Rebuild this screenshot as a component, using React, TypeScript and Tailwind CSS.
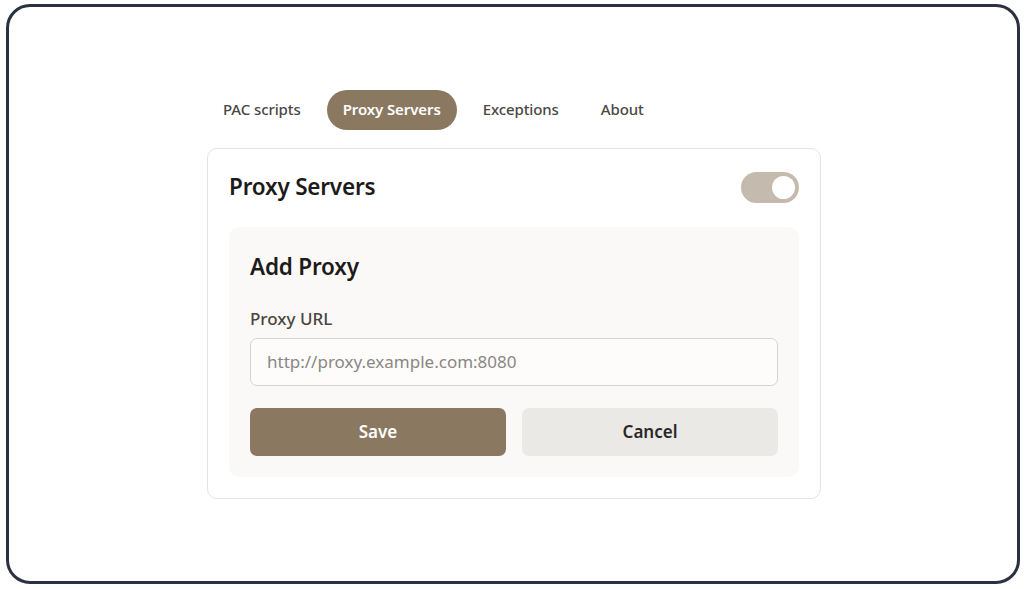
import React, { useState } from 'react';

const tabs = ['PAC scripts', 'Proxy Servers', 'Exceptions', 'About'];

export default function App() {
  const [active, setActive] = useState('Proxy Servers');
  const [enabled, setEnabled] = useState(true);
  const [url, setUrl] = useState('');

  return (
    <div
      className="w-[1026px] h-[589px] bg-white p-[4px_6px_5px_6px]"
      style={{ fontFamily: '"Noto Sans", "Open Sans", sans-serif' }}
    >
      <div className="h-full w-full rounded-[24px] border-[3px] border-[#2b3140] bg-white flex items-center justify-center">
        <div className="w-[614px] ml-[2px] flex flex-col gap-[18px]">
          <nav className="flex items-center gap-[10px]">
            {tabs.map((t) => (
              <button
                key={t}
                onClick={() => setActive(t)}
                className={
                  active === t
                    ? 'h-[40px] px-4 rounded-full bg-[#8a7960] text-white text-[15px] font-semibold tracking-[-0.1px]'
                    : 'h-[40px] px-4 rounded-full text-[#4a4744] text-[15px] font-medium tracking-[-0.1px]'
                }
              >
                {t}
              </button>
            ))}
          </nav>

          <section className="rounded-[10px] border border-[#e6e4e1] bg-white px-[21px] pt-[23px] pb-[21px]">
            <div className="flex items-center justify-between h-[31px]">
              <h2 className="text-[22.5px] font-semibold text-[#1c1b1a] tracking-[-0.2px]">Proxy Servers</h2>
              <button
                onClick={() => setEnabled(!enabled)}
                className={`w-[58px] h-[31px] rounded-full flex items-center px-[4px] ${
                  enabled ? 'bg-[#c4bbae] justify-end' : 'bg-[#dcd8d2] justify-start'
                }`}
              >
                <span className="w-[23px] h-[23px] rounded-full bg-white block" />
              </button>
            </div>

            <div className="mt-[24px] rounded-[10px] bg-[#fbf9f7] px-[21px] pt-[25px] pb-[21px]">
              <h3 className="text-[22.5px] leading-[30px] font-semibold text-[#1c1b1a] tracking-[-0.2px]">Add Proxy</h3>
              <label className="block mt-[25px] text-[17px] leading-[24px] font-medium text-[#4a4540]">Proxy URL</label>
              <input
                value={url}
                onChange={(e) => setUrl(e.target.value)}
                placeholder="http://proxy.example.com:8080"
                className="mt-[7px] w-full h-[48px] rounded-[7px] border border-[#d6d3cf] bg-[#fdfcfb] px-[16px] text-[17px] text-[#333] placeholder:text-[#8a8784] outline-none"
              />
              <div className="mt-[22px] grid grid-cols-2 gap-[16px]">
                <button className="h-[48px] rounded-[7px] bg-[#8a7960] text-white text-[17px] font-semibold">
                  Save
                </button>
                <button className="h-[48px] rounded-[7px] bg-[#ebe9e6] text-[#2a2826] text-[17px] font-semibold">
                  Cancel
                </button>
              </div>
            </div>
          </section>
        </div>
      </div>
    </div>
  );
}
